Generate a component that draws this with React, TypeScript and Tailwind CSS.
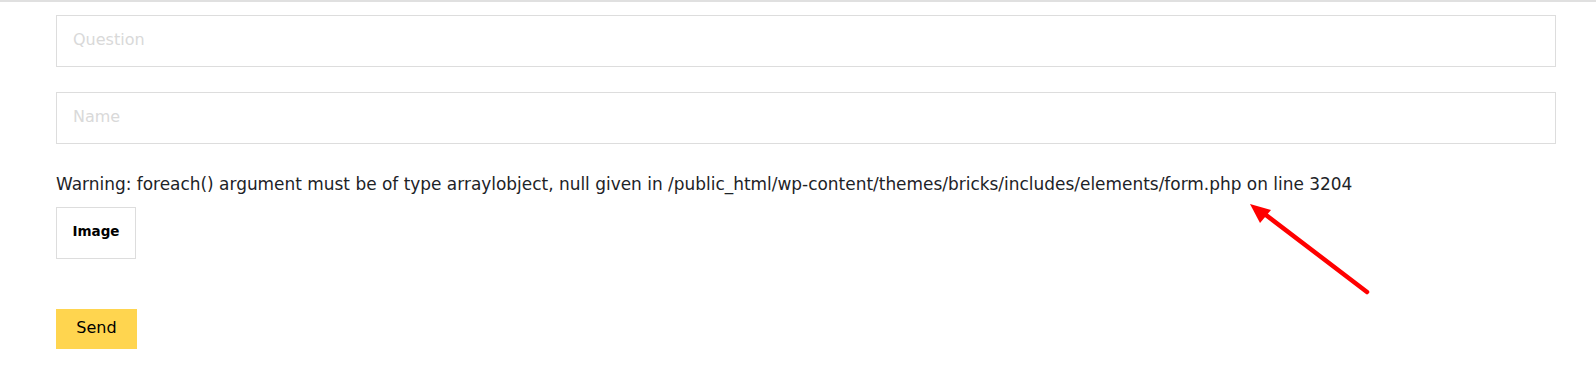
export default function App() {
  return (
    <div className="relative h-[386px] w-[1596px] overflow-hidden bg-white font-['DejaVu_Sans',sans-serif]">
      <div className="h-[2px] bg-[#e0e0e0]" />
      <form className="ml-[56px] w-[1500px] pt-[13px]">
        <input
          placeholder="Question"
          className="block h-[52px] w-full border border-[#dddddd] px-4 pb-[4px] text-[16px] text-[#333] outline-none placeholder:text-[#d9d9d9]"
        />
        <input
          placeholder="Name"
          className="mt-[25px] block h-[52px] w-full border border-[#dddddd] px-4 pb-[4px] text-[16px] text-[#333] outline-none placeholder:text-[#d9d9d9]"
        />
        <p className="mt-[29px] h-[22px] text-[16.95px] leading-[22px] text-[#1d2327]">
          Warning: foreach() argument must be of type arraylobject, null given in
          /public_html/wp-content/themes/bricks/includes/elements/form.php on line 3204
        </p>
        <div className="mt-[12px] flex h-[52px] w-[80px] items-center justify-center border border-[#dddddd] pb-[3px] text-[13.5px] font-bold text-black">
          Image
        </div>
        <button
          type="button"
          className="mt-[50px] block h-[40px] w-[81px] bg-[#ffd54f] pb-[3px] text-[16px] text-black"
        >
          Send
        </button>
      </form>
      <svg className="absolute left-0 top-0" width="1596" height="386">
        <line x1="1367" y1="292" x2="1262" y2="212" stroke="#ff0000" strokeWidth="4.5" strokeLinecap="round" />
        <polygon points="1250,204 1271,210 1260,223" fill="#ff0000" />
      </svg>
    </div>
  )
}
